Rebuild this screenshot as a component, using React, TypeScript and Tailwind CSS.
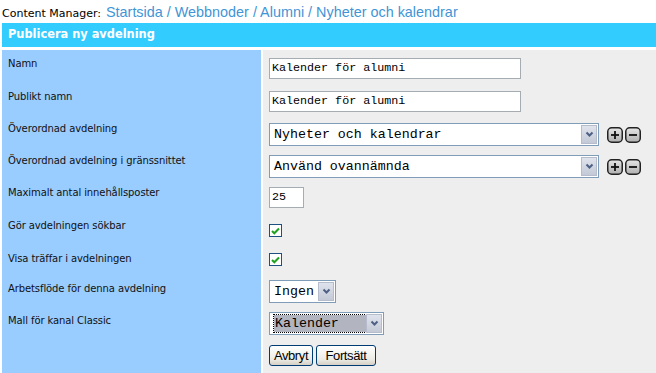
import React from "react";

const verdana = "font-['DejaVu_Sans',Verdana,sans-serif]";
const mono = "font-['Liberation_Mono','Courier_New',monospace]";

const Arrow = () => (
  <div className="w-[16px] self-stretch flex items-center justify-center bg-[linear-gradient(#dfe3ec,#c3c9d6)] border border-[#b6bccb]">
    <svg width="9" height="7" viewBox="0 0 9 7">
      <path d="M1.5 1.5 L4.5 4.5 L7.5 1.5" fill="none" stroke="#4d6185" strokeWidth="2" />
    </svg>
  </div>
);

const Select = ({ text, width, focused }: { text: string; width: string; focused?: boolean }) => (
  <div className={`flex ${width} h-[23px] bg-white border border-[#7f9db9] p-[1px]`}>
    <div className="flex-1 flex items-center pl-[3px]">
      <span
        className={`${mono} text-[13.3px] leading-none text-black ${
          focused ? "bg-[#b2b4bf] outline outline-1 outline-dotted outline-black px-[1px] py-[2px] w-[92px]" : ""
        }`}
      >
        {text}
      </span>
    </div>
    <Arrow />
  </div>
);

const RoundBtn = ({ minus }: { minus?: boolean }) => (
  <svg width="16" height="16" viewBox="0 0 16 16">
    <defs>
      <linearGradient id="rb" x1="0" y1="0" x2="0" y2="1">
        <stop offset="0" stopColor="#e6e6e6" />
        <stop offset="1" stopColor="#b0b0b0" />
      </linearGradient>
    </defs>
    <rect x="0.75" y="0.75" width="14.5" height="14.5" rx="4" fill="url(#rb)" stroke="#222" strokeWidth="1.5" />
    <path d="M4 8 H12" stroke="#111" strokeWidth="1.8" />
    {!minus && <path d="M8 4 V12" stroke="#111" strokeWidth="1.8" />}
  </svg>
);

const Check = () => (
  <div className="w-[13px] h-[13px] bg-white border border-[#1c5180] flex items-center justify-center">
    <svg width="9" height="8" viewBox="0 0 9 8">
      <path d="M1 4 L3.3 6.3 L8 1.5" fill="none" stroke="#21a121" strokeWidth="2" />
    </svg>
  </div>
);

const TextInput = ({ value, width }: { value: string; width: string }) => (
  <div className={`${width} h-[21px] bg-white border border-[#a5acb2] flex items-center pl-[2px]`}>
    <span className={`${mono} text-[11.7px] leading-none text-black`}>{value}</span>
  </div>
);

const Button = ({ label, width }: { label: string; width: string }) => (
  <div
    className={`${width} h-[21px] flex items-center justify-center rounded-[3px] border border-[#003c74] bg-[linear-gradient(#ffffff,#ecebe6_70%,#d6d0c5)] font-['Liberation_Sans',Arial,sans-serif] text-[13px] text-black tracking-[-0.4px]`}
  >
    {label}
  </div>
);

const plusMinus = (
  <div className="ml-[6px] flex gap-[2px]">
    <RoundBtn />
    <RoundBtn minus />
  </div>
);

const rows: { label: string; h: string; pt: string; field: React.ReactNode }[] = [
  { label: "Namn", h: "h-[33px]", pt: "pt-[8px]", field: <TextInput value="Kalender för alumni" width="w-[252px]" /> },
  { label: "Publikt namn", h: "h-[32px]", pt: "pt-[8px]", field: <TextInput value="Kalender för alumni" width="w-[252px]" /> },
  {
    label: "Överordnad avdelning",
    h: "h-[32px]",
    pt: "pt-[8px]",
    field: (
      <div className="flex items-center gap-[2px]">
        <Select text="Nyheter och kalendrar" width="w-[330px]" />
        {plusMinus}
      </div>
    ),
  },
  {
    label: "Överordnad avdelning i gränssnittet",
    h: "h-[32px]",
    pt: "pt-[8px]",
    field: (
      <div className="flex items-center gap-[2px]">
        <Select text="Använd ovannämnda" width="w-[330px]" />
        {plusMinus}
      </div>
    ),
  },
  { label: "Maximalt antal innehållsposter", h: "h-[33px]", pt: "pt-[8px]", field: <TextInput value="25" width="w-[35px]" /> },
  { label: "Gör avdelningen sökbar", h: "h-[33px]", pt: "pt-[12px] pl-[4px]", field: <Check /> },
  { label: "Visa träffar i avdelningen", h: "h-[30px]", pt: "pt-[8px] pl-[4px]", field: <Check /> },
  { label: "Arbetsflöde för denna avdelning", h: "h-[32px]", pt: "pt-[5px]", field: <Select text="Ingen" width="w-[67px]" /> },
  { label: "Mall för kanal Classic", h: "h-[32px]", pt: "pt-[5px]", field: <Select text="Kalender" width="w-[115px]" focused /> },
  {
    label: "",
    h: "h-[35px]",
    pt: "pt-[6px] pl-[1px]",
    field: (
      <div className="flex gap-[3px]">
        <Button label="Avbryt" width="w-[44px]" />
        <Button label="Fortsätt" width="w-[60px]" />
      </div>
    ),
  },
];

export default function App() {
  return (
    <div className="w-[656px] h-[373px] bg-white overflow-hidden">
      <div className="h-[23px] pl-[2px] pt-[2px] flex items-baseline gap-[5px]">
        <span className={`${verdana} text-[11px] text-black`}>Content Manager:</span>
        <span className="font-['Liberation_Sans',Arial,sans-serif] text-[14.4px] text-[#3f95d6]">
          Startsida / Webbnoder / Alumni / Nyheter och kalendrar
        </span>
      </div>
      <div className={`ml-[2px] h-[24px] bg-[#33ccff] flex items-center px-[6px] ${verdana} font-bold text-[11.4px] text-white`}>
        Publicera ny avdelning
      </div>
      <div className="ml-[2px] mt-[3px] flex flex-col">
        {rows.map((row, i) => (
          <div key={i} className={`flex ${row.h}`}>
            <div
              className={`w-[259px] bg-[#99ccff] pl-[6px] pt-[7px] ${verdana} text-[10px] tracking-[-0.1px] leading-[13px] text-[#111]`}
            >
              {row.label}
            </div>
            <div className={`ml-[2px] flex-1 bg-[#eeeeee] pl-[6px] ${row.pt}`}>{row.field}</div>
          </div>
        ))}
      </div>
    </div>
  );
}
